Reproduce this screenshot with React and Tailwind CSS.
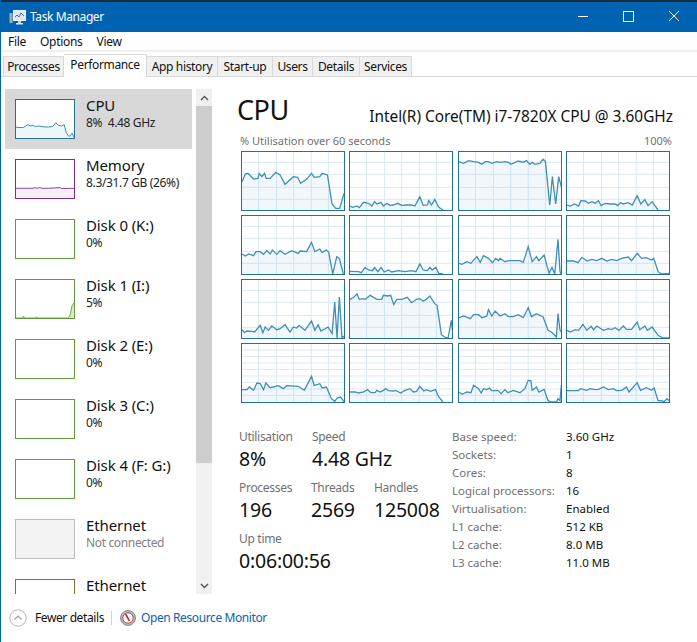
import React from 'react';

const FONT = "font-['Noto_Sans','Open_Sans',sans-serif]";

// traced from the reference at 3x, viewBox 308x174
const cores = [
  '0,89 10,66 18,64 35,81 48,79 52,64 60,74 68,64 73,79 85,79 102,61 115,69 130,97 155,74 168,76 177,94 195,82 210,64 218,76 235,74 242,64 258,69 272,156 283,169 295,169 308,124',
  '0,162 8,166 21,162 28,167 41,151 56,154 66,162 74,149 81,156 93,151 101,162 111,154 121,160 131,159 144,154 156,160 171,159 186,159 196,162 211,134 221,160 234,159 238,146 246,159 256,142 268,166 281,174',
  '0,29 14,34 29,26 44,29 59,31 69,37 79,29 89,29 99,34 114,29 124,31 139,29 149,31 157,37 179,27 194,31 204,26 214,37 221,31 229,37 244,34 254,22 261,29 274,159 282,74 292,156 301,74 309,104',
  '0,159 10,162 23,156 35,162 42,146 55,147 65,154 75,149 85,154 95,146 103,161 115,154 130,156 145,156 153,161 162,152 170,156 185,152 197,159 212,131 223,156 235,143 245,161 257,149 275,174',
  '0,114 10,120 20,114 35,119 42,107 55,107 65,115 75,104 85,114 92,102 105,115 115,104 130,115 150,104 170,112 175,105 195,107 210,79 220,107 235,99 242,109 255,102 262,109 274,174 286,122 294,127 306,174',
  '0,166 26,167 34,170 46,154 56,162 68,164 74,154 84,167 94,154 103,168 116,162 126,168 146,164 166,167 186,164 199,167 211,144 221,162 234,164 241,154 248,162 259,154 268,172 281,174',
  '0,142 9,145 24,137 36,142 54,122 64,139 74,119 89,127 101,140 111,127 119,134 124,127 139,137 149,134 184,134 194,139 209,92 221,137 234,122 241,134 257,117 272,172 281,154 289,174 299,70 305,167 309,174',
  '0,135 20,135 33,140 45,124 60,135 75,130 90,134 105,127 120,135 135,130 150,134 165,127 185,123 195,134 212,112 225,127 240,125 255,132 262,127 275,167 285,174 310,172',
  '0,149 8,158 15,153 30,154 38,156 55,136 63,158 70,141 80,151 90,138 105,149 115,146 130,134 145,156 155,141 165,144 172,136 190,151 210,123 220,151 230,134 238,153 260,141 272,161 280,66 287,174 294,51 302,174 308,168',
  '0,58 11,52 21,42 28,58 38,56 46,58 61,46 81,58 96,58 101,46 114,48 123,46 132,74 141,58 156,58 173,52 186,68 201,58 211,56 221,64 231,58 241,48 256,71 263,76 276,164 286,171 296,174 306,121 312,174',
  '0,113 14,108 34,116 44,104 59,104 69,113 84,108 89,89 99,108 109,93 124,108 139,101 149,110 164,110 179,104 194,113 209,83 219,110 234,101 254,111 269,151 279,156 294,171 299,101 305,151 309,156',
  '0,151 10,156 25,149 35,151 48,133 60,151 73,139 80,149 90,138 110,151 125,146 135,149 145,143 157,151 170,138 180,148 195,148 212,126 220,149 235,138 243,151 257,141 275,166 290,174 310,174',
  '0,137 15,137 22,129 35,139 45,117 55,119 65,137 72,117 85,131 110,125 125,134 135,125 170,127 188,139 210,97 218,124 235,119 242,132 255,129 270,164 280,172 287,162 298,159 308,174',
  '0,144 16,144 26,147 41,144 53,137 63,146 76,146 81,139 91,144 101,139 108,134 116,140 131,141 138,139 153,147 166,139 181,134 191,144 201,142 211,127 223,141 231,137 243,142 258,137 268,159 281,174',
  '0,144 9,151 24,144 36,146 44,124 59,134 67,147 74,134 84,137 92,132 99,140 119,140 127,149 139,137 147,146 164,139 184,146 199,134 209,109 217,110 221,139 234,129 241,144 251,139 257,136 269,170 279,174 294,174 299,164 305,170 309,124',
  '0,140 35,140 40,134 60,139 70,134 85,137 95,136 110,129 125,137 140,134 150,140 165,139 180,129 187,144 212,116 222,139 240,131 255,139 263,132 275,170 287,170 292,174 302,164 310,172',
];

const vLines = [50, 104, 156, 209, 261];
const hCoarse = [31, 67, 106, 142];
const hFine = [18, 37, 57, 76, 96, 115, 135, 154];

function CoreGraph({ points, fine }) {
  const hLines = fine ? hFine : hCoarse;
  return (
    <div className="h-[60px] w-[104px] border border-[#1f7397] bg-white">
      <svg viewBox="0 0 308 174" preserveAspectRatio="none" className="block h-full w-full">
        {vLines.map((x) => (
          <line key={x} x1={x} x2={x} y1="0" y2="174" stroke="#d9e9f3" strokeWidth="1" vectorEffect="non-scaling-stroke" />
        ))}
        {hLines.map((y) => (
          <line key={y} x1="0" x2="308" y1={y} y2={y} stroke="#d9e9f3" strokeWidth="1" vectorEffect="non-scaling-stroke" />
        ))}
        <polygon points={`0,174 ${points} 308,174`} fill="#a9cce6" fillOpacity="0.16" />
        <polyline points={points} fill="none" stroke="#3f8fba" strokeWidth="1.3" vectorEffect="non-scaling-stroke" />
      </svg>
    </div>
  );
}

function Thumb({ type }) {
  if (type === 'cpu') {
    const pts = '0,84 22,85 30,80 36,76 44,80 52,78 60,82 70,80 80,82 90,83 100,83 112,82 122,70 130,78 140,80 148,76 154,100 160,110 165,112 172,102 178,115';
    return (
      <div className="h-10 w-[60px] shrink-0 border border-[#1f7397] bg-white">
        <svg viewBox="0 0 178 117" preserveAspectRatio="none" className="block h-full w-full">
          <polygon points={`0,117 ${pts} 178,117`} fill="#a9cce6" fillOpacity="0.18" />
          <polyline points={pts} fill="none" stroke="#3a8cb8" strokeWidth="1" vectorEffect="non-scaling-stroke" />
        </svg>
      </div>
    );
  }
  if (type === 'memory') {
    const pts = '0,87 52,87 58,85 66,87 72,85 80,87 100,87 118,86 136,85 140,88 178,87';
    return (
      <div className="h-10 w-[60px] shrink-0 border border-[#7d2c92] bg-white">
        <svg viewBox="0 0 178 117" preserveAspectRatio="none" className="block h-full w-full">
          <polygon points={`0,117 ${pts} 178,117`} fill="#f4f0f6" />
          <polyline points={pts} fill="none" stroke="#8f3fa3" strokeWidth="1" vectorEffect="non-scaling-stroke" />
        </svg>
      </div>
    );
  }
  if (type === 'disk') {
    return <div className="h-10 w-[60px] shrink-0 border border-[#5f9c35] bg-white" />;
  }
  if (type === 'disk1') {
    const pts = '0,117 20,117 23,111 26,117 60,117 63,113 66,117 158,117 165,112 172,80 178,70';
    return (
      <div className="h-10 w-[60px] shrink-0 border border-[#5f9c35] bg-white">
        <svg viewBox="0 0 178 117" preserveAspectRatio="none" className="block h-full w-full">
          <polygon points={`${pts} 178,117`} fill="#dcebd0" />
          <polyline points={pts} fill="none" stroke="#6fa944" strokeWidth="1" vectorEffect="non-scaling-stroke" />
        </svg>
      </div>
    );
  }
  if (type === 'off') {
    return <div className="h-10 w-[60px] shrink-0 border border-[#bcbcbc] bg-[#f3f3f3]" />;
  }
  return <div className="h-10 w-[60px] shrink-0 border border-[#97652c] bg-white" />;
}

const sidebarItems = [
  { name: 'CPU', sub: '8%  4.48 GHz', thumb: 'cpu', active: true },
  { name: 'Memory', sub: '8.3/31.7 GB (26%)', thumb: 'memory' },
  { name: 'Disk 0 (K:)', sub: '0%', thumb: 'disk' },
  { name: 'Disk 1 (I:)', sub: '5%', thumb: 'disk1' },
  { name: 'Disk 2 (E:)', sub: '0%', thumb: 'disk' },
  { name: 'Disk 3 (C:)', sub: '0%', thumb: 'disk' },
  { name: 'Disk 4 (F: G:)', sub: '0%', thumb: 'disk' },
  { name: 'Ethernet', sub: 'Not connected', thumb: 'off', muted: true },
  { name: 'Ethernet', sub: '', thumb: 'eth' },
];

const details = [
  ['Base speed:', '3.60 GHz'],
  ['Sockets:', '1'],
  ['Cores:', '8'],
  ['Logical processors:', '16'],
  ['Virtualisation:', 'Enabled'],
  ['L1 cache:', '512 KB'],
  ['L2 cache:', '8.0 MB'],
  ['L3 cache:', '11.0 MB'],
];

const tabs = [
  { name: 'Processes', width: 'w-[61px]' },
  { name: 'Performance', width: 'w-[83px]', active: true },
  { name: 'App history', width: 'w-[71px]' },
  { name: 'Start-up', width: 'w-[55px]' },
  { name: 'Users', width: 'w-[40px]' },
  { name: 'Details', width: 'w-[47px]' },
  { name: 'Services', width: 'w-[52px]' },
];

function Stat({ label, value, className }) {
  return (
    <div className={className}>
      <div className="h-[18px] text-[12px] leading-[18px] tracking-[-0.3px] text-[#707070]">{label}</div>
      <div className="h-[33px] text-[19.5px] leading-[26px] tracking-[-0.2px] whitespace-nowrap text-[#111]">{value}</div>
    </div>
  );
}

function AppIcon() {
  return (
    <svg width="17" height="15" viewBox="0 0 17 15" className="shrink-0">
      <rect x="0.5" y="3" width="3" height="10" fill="#9fb0a8" />
      <rect x="4.5" y="0.5" width="12" height="10" fill="#dfe8ef" stroke="#eef3f6" />
      <polyline points="6,7 8,5 10,7 12,3 15,6" fill="none" stroke="#3f6f93" strokeWidth="1" />
      <rect x="9" y="11" width="3" height="2" fill="#c9d3da" />
      <rect x="7" y="13" width="7" height="1.5" fill="#e3e8ec" />
    </svg>
  );
}

function MonitorIcon() {
  return (
    <svg width="16" height="16" viewBox="0 0 16 16" className="shrink-0">
      <circle cx="8" cy="8" r="7.5" fill="#b9b9b9" stroke="#8c8c8c" />
      <circle cx="8" cy="8" r="5.2" fill="#fff" stroke="#a03030" strokeWidth="0.8" />
      <path d="M5 4.5 L8.8 11.5 L10 10.5 L6.4 3.8 Z" fill="#c01f1f" />
    </svg>
  );
}

export default function App() {
  return (
    <div className={`${FONT} flex h-[642px] w-[697px] flex-col overflow-hidden border-l border-[#0063b1] bg-white text-[#111]`}>
      <div className="h-[2px] shrink-0 bg-[#1c2c40]" />

      {/* title bar */}
      <div className="flex h-[30px] shrink-0 items-center bg-[#0063b1] pl-[8px] text-white">
        <AppIcon />
        <span className="ml-[4px] text-[12px] tracking-[-0.4px]">Task Manager</span>
        <div className="ml-auto flex items-center">
          <svg width="140" height="30" viewBox="0 0 140 30">
            <line x1="21" x2="31" y1="14.5" y2="14.5" stroke="#fff" />
            <rect x="66.5" y="9.5" width="10" height="10" fill="none" stroke="#fff" />
            <path d="M112 9 L122 19 M122 9 L112 19" stroke="#fff" fill="none" />
          </svg>
        </div>
      </div>

      {/* menu */}
      <div className="flex h-[18px] shrink-0 items-center gap-[14px] pl-[7px] pt-px text-[12px] tracking-[-0.3px]">
        <span>File</span>
        <span>Options</span>
        <span>View</span>
      </div>
      <div className="h-[2px] shrink-0 bg-[#f0f0f0]" />

      {/* tabs */}
      <div className="flex h-[25px] shrink-0 items-end border-b border-[#d9d9d9] pl-[2px] text-[12px] tracking-[-0.35px]">
        {tabs.map((t) =>
          t.active ? (
            <div key={t.name} className={`${t.width} relative z-10 -mb-px flex h-[23px] items-center justify-center border border-b-0 border-l-0 border-[#d9d9d9] bg-white pb-[3px]`}>
              {t.name}
            </div>
          ) : (
            <div key={t.name} className={`${t.width} flex h-[20px] items-center justify-center border border-b-0 border-l-0 border-[#d9d9d9] bg-[#f0f0f0] pt-[1px] first:border-l`}>
              {t.name}
            </div>
          )
        )}
      </div>

      <div className="flex min-h-0 flex-1 pt-[12px]">
        {/* sidebar */}
        <div className="flex h-[505px] w-[211px] shrink-0 overflow-hidden">
          <div className="ml-[4px] w-[187px] shrink-0">
            {sidebarItems.map((item, i) => (
              <div key={i} className={`flex h-[60px] items-start gap-[11px] pl-[10px] pt-[10px] ${item.active ? 'bg-[#d8d8d8]' : ''}`}>
                <Thumb type={item.thumb} />
                <div className="-mt-[4px]">
                  <div className="text-[15px] leading-[20px] tracking-[-0.1px] whitespace-nowrap">{item.name}</div>
                  <div className={`text-[12px] leading-[16px] tracking-[-0.35px] whitespace-pre ${item.muted ? 'text-[#808080]' : 'text-[#222]'}`}>{item.sub}</div>
                </div>
              </div>
            ))}
          </div>
          <div className="ml-[4px] flex w-[16px] shrink-0 flex-col bg-[#f0f0f0]">
            <div className="flex h-[17px] items-center justify-center">
              <svg width="9" height="6" viewBox="0 0 9 6"><path d="M1 5 L4.5 1.5 L8 5" fill="none" stroke="#555" strokeWidth="1.4" /></svg>
            </div>
            <div className="h-[357px] bg-[#cdcdcd]" />
            <div className="flex-1" />
            <div className="flex h-[17px] items-center justify-center">
              <svg width="9" height="6" viewBox="0 0 9 6"><path d="M1 1 L4.5 4.5 L8 1" fill="none" stroke="#555" strokeWidth="1.4" /></svg>
            </div>
          </div>
        </div>

        {/* main panel */}
        <div className="min-w-0 flex-1 pl-[25px]">
          <div className="flex h-[42px] w-[436px] items-end justify-between">
            <span className="text-[27px] leading-[42px] tracking-[-0.5px]">CPU</span>
            <span className="pb-[4px] text-[15.4px] leading-[20px] whitespace-nowrap">Intel(R) Core(TM) i7-7820X CPU @ 3.60GHz</span>
          </div>
          <div className="mt-[2px] flex h-[16px] w-[435px] justify-between pl-[3px] text-[11px] leading-[16px] text-[#707070]">
            <span>% Utilisation over 60 seconds</span>
            <span>100%</span>
          </div>
          <div className="mt-[2px] ml-[4px] grid w-[429px] grid-cols-[104px_105px_104px_104px] gap-x-[4px] gap-y-[4px]">
            {cores.map((pts, i) => (
              <CoreGraph key={i} points={pts} fine={i >= 12} />
            ))}
          </div>

          <div className="mt-[25px] flex">
            <div className="w-[215px] shrink-0 pl-[2px]">
              <div className="flex">
                <Stat label="Utilisation" value="8%" className="w-[73px]" />
                <Stat label="Speed" value="4.48 GHz" />
              </div>
              <div className="flex">
                <Stat label="Processes" value="196" className="w-[72px]" />
                <Stat label="Threads" value="2569" className="w-[63px]" />
                <Stat label="Handles" value="125008" />
              </div>
              <Stat label="Up time" value="0:06:00:56" />
            </div>
            <div className="grid grid-cols-[114px_1fr] auto-rows-[18px] text-[11.5px] leading-[18px] whitespace-nowrap">
              {details.map(([k, v]) => (
                <React.Fragment key={k}>
                  <span className="text-[#707070]">{k}</span>
                  <span>{v}</span>
                </React.Fragment>
              ))}
            </div>
          </div>
        </div>
      </div>

      {/* footer */}
      <div className="flex h-[48px] shrink-0 items-center pb-[1px] pl-[8px] text-[12px] tracking-[-0.4px]">
        <svg width="18" height="18" viewBox="0 0 18 18" className="shrink-0">
          <circle cx="9" cy="9" r="8.2" fill="#fff" stroke="#b5b5b5" />
          <path d="M5.5 10.5 L9 7 L12.5 10.5" fill="none" stroke="#a0a0a0" strokeWidth="1.2" />
        </svg>
        <span className="ml-[8px]">Fewer details</span>
        <div className="ml-[7px] mr-[8px] h-[14px] w-px bg-[#d0d0d0]" />
        <MonitorIcon />
        <span className="ml-[5px] text-[#0b62ad]">Open Resource Monitor</span>
      </div>
    </div>
  );
}
